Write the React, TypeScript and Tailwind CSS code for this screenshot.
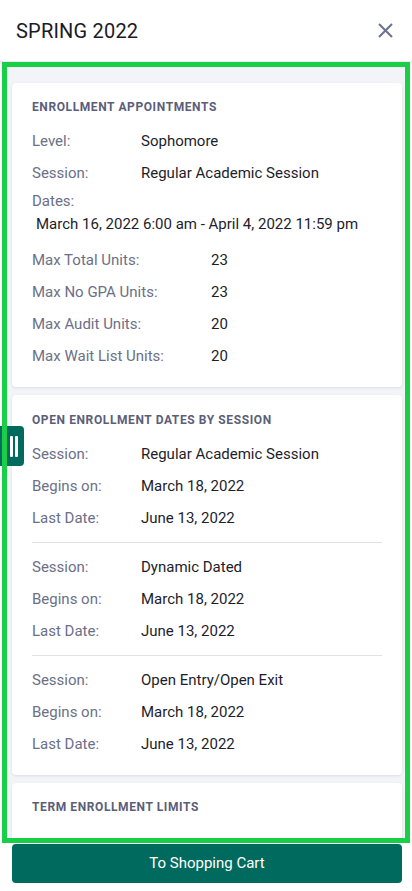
import React from "react";

type Row = { label: string; value: string };

const appointmentRows: Row[] = [
  { label: "Level:", value: "Sophomore" },
  { label: "Session:", value: "Regular Academic Session" },
];

const unitRows: Row[] = [
  { label: "Max Total Units:", value: "23" },
  { label: "Max No GPA Units:", value: "23" },
  { label: "Max Audit Units:", value: "20" },
  { label: "Max Wait List Units:", value: "20" },
];

const sessions = [
  { name: "Regular Academic Session", begins: "March 18, 2022", last: "June 13, 2022" },
  { name: "Dynamic Dated", begins: "March 18, 2022", last: "June 13, 2022" },
  { name: "Open Entry/Open Exit", begins: "March 18, 2022", last: "June 13, 2022" },
];

function CardTitle({ children }: { children: React.ReactNode }) {
  return (
    <div className="h-4 mb-[10px] flex items-center text-[12px] font-bold tracking-[0.6px] uppercase text-[#5b5e78]">
      {children}
    </div>
  );
}

// label/value pair, wide rows push the value column further right
function InfoRow({ label, value, wide }: Row & { wide?: boolean }) {
  return (
    <div className="h-8 flex items-center text-[15px]">
      <span className={wide ? "w-[179px] shrink-0 text-[#6c6f87]" : "w-[109px] shrink-0 text-[#6c6f87]"}>
        {label}
      </span>
      <span className="text-[#1d1d2b]">{value}</span>
    </div>
  );
}

function App() {
  return (
    <div
      className="relative w-[412px] h-[891px] bg-white flex flex-col overflow-hidden"
      style={{ fontFamily: "Roboto, 'Liberation Sans', sans-serif" }}
    >
      {/* header */}
      <div className="h-[62px] shrink-0 flex items-center justify-between pl-4 pr-[19px] border-b border-[#e8e8ee]">
        <h1 className="text-[20px] text-[#1b1b26] tracking-[0.2px]">SPRING 2022</h1>
        <button aria-label="Close">
          <svg width="15" height="15" viewBox="0 0 15 15" fill="none" stroke="#6b7290" strokeWidth="2">
            <path d="M1 1L14 14M14 1L1 14" />
          </svg>
        </button>
      </div>

      {/* scroll area */}
      <div className="relative mx-[2px] h-[781px] shrink-0">
        <div className="h-full overflow-hidden bg-[#f3f4f8] pl-[10px] pr-2 pt-[21px]">
          <div className="bg-white rounded-[4px] shadow-[0_1px_3px_rgba(40,40,80,0.1)] px-5 pt-[16px] pb-[15px]">
            <CardTitle>Enrollment Appointments</CardTitle>
            {appointmentRows.map((r) => (
              <InfoRow key={r.label} {...r} />
            ))}
            <div className="h-6 flex items-center text-[15px] text-[#6c6f87]">Dates:</div>
            <div className="h-[22px] flex items-center text-[15px] text-[#1d1d2b] pl-1">
              March 16, 2022 6:00 am - April 4, 2022 11:59 pm
            </div>
            <div className="mt-[9px]">
              {unitRows.map((r) => (
                <InfoRow key={r.label} {...r} wide />
              ))}
            </div>
          </div>

          <div className="mt-2 bg-white rounded-[4px] shadow-[0_1px_3px_rgba(40,40,80,0.1)] px-5 pt-[17px] pb-[15px]">
            <CardTitle>Open Enrollment Dates by Session</CardTitle>
            {sessions.map((s, i) => (
              <div key={s.name}>
                {i > 0 && <div className="h-px bg-[#e0e0e8] my-2" />}
                <InfoRow label="Session:" value={s.name} />
                <InfoRow label="Begins on:" value={s.begins} />
                <InfoRow label="Last Date:" value={s.last} />
              </div>
            ))}
          </div>

          <div className="mt-2 h-[120px] bg-white rounded-[4px] shadow-[0_1px_3px_rgba(40,40,80,0.1)] px-5 pt-4">
            <CardTitle>Term Enrollment Limits</CardTitle>
          </div>
        </div>

        {/* side drawer handle */}
        <div className="absolute -left-[2px] top-[364px] z-10 w-6 h-10 bg-[#006a5e] rounded-r-[4px] flex items-center justify-center gap-[2px] pl-[3px]">
          <span className="w-[3px] h-[21px] bg-white rounded-[1px]" />
          <span className="w-[3px] h-[21px] bg-white rounded-[1px]" />
        </div>

        {/* highlight frame */}
        <div className="pointer-events-none absolute inset-0 z-20 border-[5px] border-[#19cf48]" />
      </div>

      <button className="ml-3 mt-px w-[390px] h-[39px] shrink-0 rounded-[4px] bg-[#006a5e] text-white text-[15px]">
        To Shopping Cart
      </button>
    </div>
  );
}

export default App;
